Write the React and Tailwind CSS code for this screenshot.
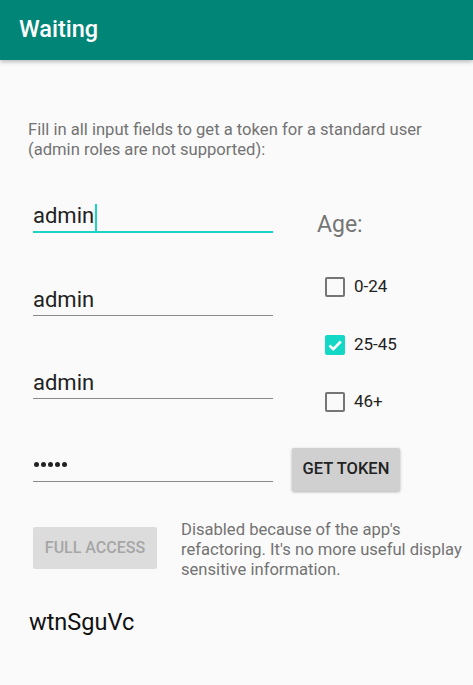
export default function App() {
  const Check = ({ checked, label }) => (
    <div className="h-[40px] flex items-center">
      {checked ? (
        <div className="w-[20px] h-[20px] rounded-[2px] bg-[#14d8c6] flex items-center justify-center">
          <svg width="20" height="20" viewBox="0 0 20 20">
            <path d="M4.5 10.5L8.3 14.2L15.8 6.5" fill="none" stroke="white" strokeWidth="2.6" />
          </svg>
        </div>
      ) : (
        <div className="w-[20px] h-[20px] rounded-[2px] border-2 border-[#757575]" />
      )}
      <span className="ml-[9px] text-[17px] text-[#222]">{label}</span>
    </div>
  );
  return (
    <div className="min-h-[685px] bg-[#fafafa] font-['Roboto',sans-serif]">
      <div className="h-[60px] bg-[#008577] shadow-[0_2px_4px_rgba(0,0,0,0.25)] flex items-center pl-[19px] text-white text-[23.5px] font-medium">
        Waiting
      </div>
      <div className="pt-[60px] pl-[28px] text-[16.6px] leading-[20px] text-[#737373]">
        Fill in all input fields to get a token for a standard user
        <br />
        (admin roles are not supported):
      </div>
      <div className="flex mt-[-10px]">
        <div className="ml-[33px] w-[240px] flex flex-col">
          <div className="h-[83px] flex items-end pb-[3px] border-b-2 border-[#1ad5c4] text-[22px] leading-[24px] text-[#222]">
            admin<span className="inline-block w-[2px] h-[27px] bg-[#1ad5c4] ml-[1px] mb-[-3px]" />
          </div>
          <div className="h-[83px] flex items-end pb-[3px] border-b border-[#8a8a8a] text-[22px] leading-[24px] text-[#222]">
            admin
          </div>
          <div className="h-[83px] flex items-end pb-[3px] border-b border-[#8a8a8a] text-[22px] leading-[24px] text-[#222]">
            admin
          </div>
          <div className="h-[83px] flex items-end pb-[14px] pl-[1px] border-b border-[#8a8a8a] gap-[2px]">
            <span className="w-[5px] h-[5px] rounded-full bg-[#222]" />
            <span className="w-[5px] h-[5px] rounded-full bg-[#222]" />
            <span className="w-[5px] h-[5px] rounded-full bg-[#222]" />
            <span className="w-[5px] h-[5px] rounded-full bg-[#222]" />
            <span className="w-[5px] h-[5px] rounded-full bg-[#222]" />
          </div>
        </div>
        <div className="ml-[19px] flex flex-col">
          <div className="mt-[62px] ml-[25px] h-[26px] text-[23px] leading-[26px] text-[#757575]">Age:</div>
          <div className="ml-[33px] mt-[29px] flex flex-col gap-[17.5px]">
            <Check label="0-24" />
            <Check checked label="25-45" />
            <Check label="46+" />
          </div>
          <button className="mt-[26px] w-[108px] h-[43px] rounded-[2px] bg-[#d0d0d0] shadow-[0_1px_3px_rgba(0,0,0,0.3)] text-[16.5px] font-medium text-[#222] flex items-center justify-center">
            GET TOKEN
          </button>
        </div>
      </div>
      <div className="flex mt-[36px]">
        <div className="ml-[33px] w-[124px] h-[42px] rounded-[2px] bg-[#dcdcdc] flex items-center justify-center text-[16px] font-medium text-[#a6a6a6]">
          FULL ACCESS
        </div>
        <div className="ml-[24px] mt-[-7px] text-[16.6px] leading-[20px] text-[#737373]">
          Disabled because of the app's
          <br />
          refactoring. It's no more useful display
          <br />
          sensitive information.
        </div>
      </div>
      <div className="mt-[28px] ml-[29px] text-[23.5px] leading-[28px] text-[#111]">wtnSguVc</div>
    </div>
  );
}
